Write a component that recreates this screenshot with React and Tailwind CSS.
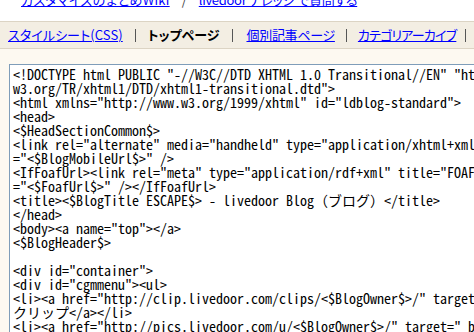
import React from "react";

const code = `<!DOCTYPE html PUBLIC "-//W3C//DTD XHTML 1.0 Transitional//EN" "http://www.
w3.org/TR/xhtml1/DTD/xhtml1-transitional.dtd">
<html xmlns="http://www.w3.org/1999/xhtml" id="ldblog-standard">
<head>
<$HeadSectionCommon$>
<link rel="alternate" media="handheld" type="application/xhtml+xml" href
="<$BlogMobileUrl$>" />
<IfFoafUrl><link rel="meta" type="application/rdf+xml" title="FOAF" href
="<$FoafUrl$>" /></IfFoafUrl>
<title><$BlogTitle ESCAPE$> - livedoor Blog（ブログ）</title>
</head>
<body><a name="top"></a>
<$BlogHeader$>

<div id="container">
<div id="cgmmenu"><ul>
<li><a href="http://clip.livedoor.com/clips/<$BlogOwner$>/" target="_blank">
クリップ</a></li>
<li><a href="http://pics.livedoor.com/u/<$BlogOwner$>/" target="_blank">`;

export default function App() {
  return (
    <div className="w-[474px] h-[332px] overflow-hidden bg-[#fdf9f1] font-['Noto_Sans_CJK_JP',sans-serif] [font-feature-settings:'palt']">
      <div className="h-[21px] bg-white overflow-hidden">
        <div className="flex items-end h-[9px] -mt-[3px] pl-[21px] text-[13px] leading-[13px] whitespace-nowrap">
          <a href="#" className="shrink-0 text-[#0000ff] underline tracking-[0.3px]">カスタマイズのまとめWiki</a>
          <span className="shrink-0 mx-[12px] text-[#444]">/</span>
          <a href="#" className="shrink-0 text-[#0000ff] underline tracking-[-0.3px]">livedoor ナレッジ で質問する</a>
        </div>
      </div>
      <div className="h-[28px] bg-[#f3eee3] border-t border-b border-[#dcd4c4] flex items-center pl-[8px] text-[13px] whitespace-nowrap">
        <a href="#" className="shrink-0 text-[#0000ff] underline tracking-[0.1px]">スタイルシート(CSS)</a>
        <span className="shrink-0 mx-[12px] w-px h-[13px] bg-[#555]"></span>
        <span className="shrink-0 font-bold text-black">トップページ</span>
        <span className="shrink-0 mx-[13px] w-px h-[13px] bg-[#555]"></span>
        <a href="#" className="shrink-0 text-[#0000ff] underline tracking-[-0.3px]">個別記事ページ</a>
        <span className="shrink-0 mx-[11px] w-px h-[13px] bg-[#555]"></span>
        <a href="#" className="shrink-0 text-[#0000ff] underline tracking-[-0.8px]">カテゴリアーカイブ</a>
        <span className="shrink-0 mx-[9px] w-px h-[13px] bg-[#555]"></span>
      </div>
      <div className="pt-[15px] pl-[9px]">
        <div className="w-[520px] h-[300px] bg-white border border-[#7f9db9] pl-[3px] pt-[2px] overflow-hidden">
          <pre className="font-['Noto_Sans_Mono_CJK_JP','Liberation_Mono',monospace] [font-feature-settings:normal] text-[14px] leading-[14px] text-black whitespace-pre">{code}</pre>
        </div>
      </div>
    </div>
  );
}
